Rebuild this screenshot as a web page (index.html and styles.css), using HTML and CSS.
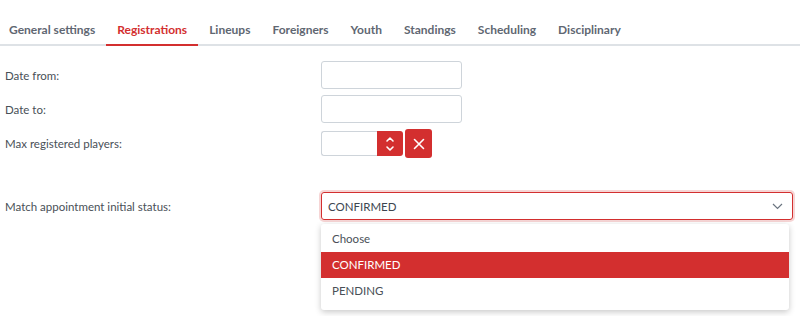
FILE: index.html
```html
<!DOCTYPE html>
<html lang="en">
<head>
	<meta charset="UTF-8">
	<title>Competition settings</title>
	<link rel="stylesheet" href="styles.css">
</head>
<body>
	<nav class="tabs">
		<a class="tab">General settings</a>
		<a class="tab active">Registrations</a>
		<a class="tab">Lineups</a>
		<a class="tab">Foreigners</a>
		<a class="tab">Youth</a>
		<a class="tab">Standings</a>
		<a class="tab">Scheduling</a>
		<a class="tab">Disciplinary</a>
	</nav>

	<div class="form">
		<div class="row">
			<span class="label">Date from:</span>
			<span class="input date"></span>
		</div>
		<div class="row">
			<span class="label">Date to:</span>
			<span class="input date"></span>
		</div>
		<div class="row">
			<span class="label">Max registered players:</span>
			<div class="number">
				<span class="input num"></span>
				<span class="spin">
					<svg width="10" height="18" viewBox="0 0 10 18"><path d="M2 6 L5 3 L8 6 M2 12 L5 15 L8 12" fill="none" stroke="#fff" stroke-width="1.6" stroke-linecap="round" stroke-linejoin="round"/></svg>
				</span>
				<span class="clear">
					<svg width="12" height="12" viewBox="0 0 12 12"><path d="M1.5 1.5 L10.5 10.5 M10.5 1.5 L1.5 10.5" stroke="#fff" stroke-width="1.6" stroke-linecap="round"/></svg>
				</span>
			</div>
		</div>

		<div class="row status">
			<span class="label">Match appointment initial status:</span>
			<div class="select-wrap">
				<div class="select">
					<span>CONFIRMED</span>
					<svg width="11" height="7" viewBox="0 0 11 7"><path d="M1 1 L5.5 5.5 L10 1" fill="none" stroke="#6b7580" stroke-width="1.2"/></svg>
				</div>
				<div class="menu">
					<div class="option">Choose</div>
					<div class="option selected">CONFIRMED</div>
					<div class="option">PENDING</div>
				</div>
			</div>
		</div>
	</div>
</body>
</html>
```

FILE: styles.css
```css
* {
	box-sizing: border-box;
}
html,
body {
	margin: 0;
	background: #fff;
	font: 11.5px 'Lato', sans-serif;
	color: #495057;
}

.tabs {
	display: flex;
	height: 46px;
	border-bottom: 2px solid #dee2e6;
	margin-right: 5px;
}
.tab {
	display: flex;
	align-items: center;
	padding: 15px 11px 0;
	margin-bottom: -2px;
	font-weight: bold;
	font-size: 12px;
	color: #5f6772;
	border-bottom: 2px solid transparent;
}
.tab:first-child {
	padding-left: 9px;
}
.tab.active {
	color: #d32f2f;
	border-bottom-color: #d32f2f;
}

.form {
	padding: 15px 0 0 5px;
}
.row {
	display: flex;
	align-items: center;
	margin-bottom: 6px;
}
.label {
	width: 316px;
	flex: none;
}
.input {
	display: block;
	border: 1px solid #ced4da;
	border-radius: 3px;
	background: #fff;
}
.date {
	width: 141px;
	height: 28px;
}

.number {
	display: flex;
	align-items: center;
}
.num {
	width: 56px;
	height: 25px;
	border-radius: 3px 0 0 3px;
	border-right: none;
}
.spin {
	width: 26px;
	height: 25px;
	background: #d32f2f;
	border-radius: 0 3px 3px 0;
	display: flex;
	align-items: center;
	justify-content: center;
}
.clear {
	width: 27px;
	height: 29px;
	margin-left: 2px;
	background: #d32f2f;
	border-radius: 3px;
	display: flex;
	align-items: center;
	justify-content: center;
}

.status {
	margin-top: 34px;
	align-items: flex-start;
}
.status .label {
	padding-top: 8px;
}
.select-wrap {
	width: 472px;
}
.select {
	height: 28px;
	border: 1px solid #d32f2f;
	border-radius: 3px;
	box-shadow: 0 0 0 2px rgba(211, 47, 47, 0.2);
	display: flex;
	align-items: center;
	justify-content: space-between;
	padding: 0 9px 0 6px;
	color: #3d4650;
}
.menu {
	width: 468px;
	margin-top: 4px;
	padding: 2px 0 6px;
	background: #fff;
	border-radius: 3px;
	box-shadow: 0 2px 6px rgba(0, 0, 0, 0.22);
}
.option {
	height: 26px;
	line-height: 26px;
	padding-left: 11px;
	color: #495057;
}
.option.selected {
	background: #d32f2f;
	color: #fff;
}
```
